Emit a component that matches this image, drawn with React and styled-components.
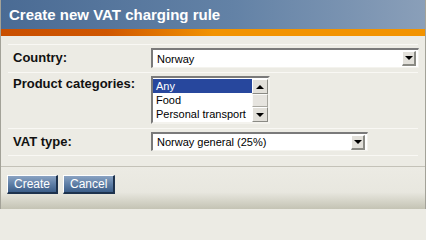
import React from "react";
import styled, { createGlobalStyle } from "styled-components";

const GlobalStyle = createGlobalStyle`
  html, body {
    margin: 0;
    padding: 0;
    background: #ecebe4;
  }
  body {
    font-family: "Liberation Sans", Arial, sans-serif;
  }
`;

function Arrow({ up }) {
  return <Triangle $up={up} />;
}

function Dropdown({ value, width, height }) {
  return (
    <SelectBox style={{ width, height }}>
      <SelectText>{value}</SelectText>
      <DropButton>
        <Arrow />
      </DropButton>
    </SelectBox>
  );
}

const categories = ["Any", "Food", "Personal transport"];

function App() {
  return (
    <>
      <GlobalStyle />
      <Dialog>
        <Header>
          <Title>Create new VAT charging rule</Title>
        </Header>
        <Stripe />
        <Body>
          <Form>
            <Row>
              <Label>Country:</Label>
              <Dropdown value="Norway" width={268} height={20} />
            </Row>
            <Row>
              <Label $top>Product categories:</Label>
              <ListBox>
                <Options>
                  {categories.map((c, i) => (
                    <Option key={c} $selected={i === 0}>
                      {c}
                    </Option>
                  ))}
                </Options>
                <ScrollBar>
                  <ScrollButton>
                    <Arrow up />
                  </ScrollButton>
                  <Thumb />
                  <ScrollButton>
                    <Arrow />
                  </ScrollButton>
                </ScrollBar>
              </ListBox>
            </Row>
            <Row>
              <Label>VAT type:</Label>
              <Dropdown value="Norway general (25%)" width={217} height={19} />
            </Row>
          </Form>
        </Body>
        <Footer>
          <Button>Create</Button>
          <Button>Cancel</Button>
        </Footer>
      </Dialog>
    </>
  );
}

export default App;

const Dialog = styled.div`
  width: 426px;
  height: 209px;
  box-sizing: border-box;
  display: flex;
  flex-direction: column;
  border-left: 1px solid #a3a298;
  border-right: 1px solid #a3a298;
  background: #ecebe4;
  overflow: hidden;
`;

const Header = styled.div`
  height: 29px;
  background: linear-gradient(to right, #4a6b94 0%, #6382a6 55%, #8a9fb9 100%);
  display: flex;
  align-items: center;
  padding-left: 8px;
`;

const Title = styled.h1`
  margin: 0;
  font-size: 15px;
  line-height: 29px;
  font-weight: bold;
  color: #ffffff;
`;

const Stripe = styled.div`
  height: 7px;
  background: linear-gradient(to right, #c94f00 0%, #cf5600 25%, #f29300 50%, #f29300 100%);
`;

const Body = styled.div`
  padding: 8px 7px 0 7px;
`;

const Form = styled.div`
  border-top: 1px solid #f9f8f4;
`;

const Row = styled.div`
  display: grid;
  grid-template-columns: 143px 1fr;
  align-items: center;
  padding: 3px 0 4px;
  border-bottom: 1px solid #f9f8f4;
`;

const Label = styled.label`
  align-self: ${(p) => (p.$top ? "start" : "center")};
  padding-left: 5px;
  font-size: 13px;
  line-height: 15px;
  font-weight: bold;
  color: #111;
  margin-top: ${(p) => (p.$top ? "0" : "-1px")};
`;

const SelectBox = styled.div`
  box-sizing: border-box;
  display: flex;
  align-items: center;
  background: #fff;
  border-top: 2px solid #7a7a7a;
  border-left: 2px solid #7a7a7a;
  border-right: 1px solid #f4f3ee;
  border-bottom: 1px solid #f4f3ee;
  padding: 1px 2px 1px 4px;
`;

const SelectText = styled.span`
  flex: 1;
  font-size: 11px;
  color: #000;
  white-space: nowrap;
`;

const DropButton = styled.div`
  width: 14px;
  height: 15px;
  box-sizing: border-box;
  display: flex;
  align-items: center;
  justify-content: center;
  background: #e2e0da;
  border-top: 1px solid #ffffff;
  border-left: 1px solid #ffffff;
  border-right: 2px solid #8a8a84;
  border-bottom: 2px solid #8a8a84;
`;

const Triangle = styled.span`
  width: 0;
  height: 0;
  border-left: 4px solid transparent;
  border-right: 4px solid transparent;
  ${(p) =>
    p.$up ? "border-bottom: 4px solid #000;" : "border-top: 4px solid #000;"}
`;

const ListBox = styled.div`
  width: 119px;
  height: 48px;
  box-sizing: border-box;
  display: flex;
  background: #fff;
  border-top: 2px solid #7a7a7a;
  border-left: 2px solid #7a7a7a;
  border-right: 2px solid #f4f3ee;
  border-bottom: 2px solid #f4f3ee;
  padding-top: 1px;
`;

const Options = styled.div`
  flex: 1;
  overflow: hidden;
`;

const Option = styled.div`
  height: 14px;
  line-height: 14px;
  padding-left: 3px;
  font-size: 11px;
  white-space: nowrap;
  color: ${(p) => (p.$selected ? "#fff" : "#000")};
  background: ${(p) => (p.$selected ? "#27479d" : "transparent")};
`;

const ScrollBar = styled.div`
  width: 16px;
  display: flex;
  flex-direction: column;
  background: #dcdad4;
`;

const ScrollButton = styled.div`
  height: 15px;
  box-sizing: border-box;
  display: flex;
  align-items: center;
  justify-content: center;
  background: #e2e0da;
  border-top: 1px solid #ffffff;
  border-left: 1px solid #ffffff;
  border-right: 1px solid #8a8a84;
  border-bottom: 1px solid #8a8a84;
`;

const Thumb = styled.div`
  flex: 1;
  box-sizing: border-box;
  background: #e6e4df;
  border-top: 1px solid #fafaf8;
  border-left: 1px solid #fafaf8;
  border-right: 1px solid #a8a7a0;
  border-bottom: 1px solid #a8a7a0;
`;

const Footer = styled.div`
  flex: 1;
  margin-top: 10px;
  border-top: 1px solid #c4c2b8;
  display: flex;
  align-items: flex-start;
  gap: 5px;
  padding: 8px 6px 0;
  background: linear-gradient(to bottom, #ecebe4 0%, #e8e7df 60%, #c4c3b4 100%);
`;

const Button = styled.button`
  height: 19px;
  box-sizing: border-box;
  padding: 0 6px;
  font-family: "Liberation Sans", Arial, sans-serif;
  font-size: 12px;
  color: #fff;
  background: linear-gradient(to bottom, #8aa3c2 0%, #5f7fa6 50%, #3c5d88 100%);
  border-top: 1px solid #ffffff;
  border-left: 1px solid #ffffff;
  border-right: 2px solid #1d324d;
  border-bottom: 2px solid #1d324d;
  cursor: pointer;
`;
